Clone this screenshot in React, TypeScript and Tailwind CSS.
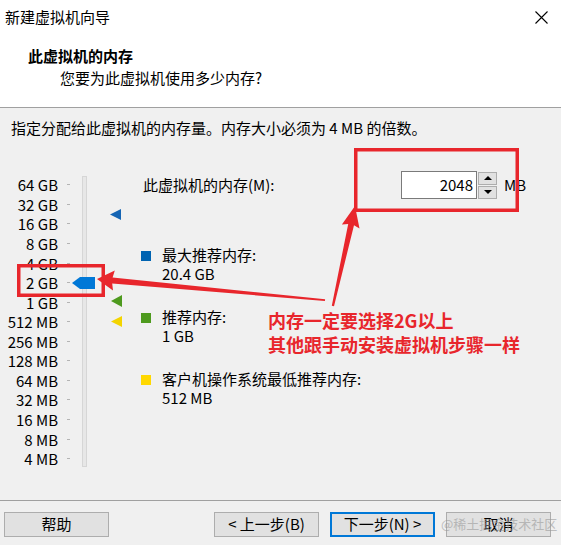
import React from 'react'

const SCALE = [
  '64 GB', '32 GB', '16 GB', '8 GB', '4 GB', '2 GB', '1 GB',
  '512 MB', '256 MB', '128 MB', '64 MB', '32 MB', '16 MB', '8 MB', '4 MB',
]

const FONT = { fontFamily: "'Noto Sans CJK SC', 'Noto Sans', sans-serif" }

function Legend({ color, label, value }: { color: string; label: string; value: string }) {
  return (
    <div className="flex leading-[19px]">
      <div className="w-[21px] pt-[6px]">
        <div className={`h-[10px] w-[10px] ${color}`} />
      </div>
      <div>
        <div>{label}</div>
        <div>{value}</div>
      </div>
    </div>
  )
}

function Btn({ children, primary }: { children: React.ReactNode; primary?: boolean }) {
  return (
    <div
      className={
        primary
          ? 'flex h-[25px] w-[105px] items-center justify-center border-2 border-[#0078d7] bg-[#e1e1e1]'
          : 'flex h-[25px] w-[105px] items-center justify-center border border-[#adadad] bg-[#e1e1e1]'
      }
    >
      {children}
    </div>
  )
}

export default function App() {
  return (
    <div className="relative h-[545px] w-[561px] overflow-hidden bg-[#f0f0f0] text-[15px] text-black" style={FONT}>
      {/* 标题栏 + 页头 */}
      <div className="h-[108px] border-b border-[#a0a0a0] bg-white">
        <div className="flex h-[34px] items-center justify-between pl-[5px] pr-[13px] leading-[20px]">
          <span>新建虚拟机向导</span>
          <svg width="13" height="13" viewBox="0 0 13 13" fill="none" stroke="#000" strokeWidth="1.1">
            <path d="M0.5 0.5L12.5 12.5M12.5 0.5L0.5 12.5" />
          </svg>
        </div>
        <div className="pl-[28px] pt-[12px]">
          <div className="font-bold leading-[20px]">此虚拟机的内存</div>
          <div className="mt-[2px] pl-[32px] leading-[20px]">您要为此虚拟机使用多少内存?</div>
        </div>
      </div>

      {/* 主体 */}
      <div className="h-[392px]">
        <div className="h-[40px] pl-[11px] pt-[10px] leading-[20px]">指定分配给此虚拟机的内存量。内存大小必须为 4 MB 的倍数。</div>

        <div className="flex">
          {/* 滑块 */}
          <div className="relative h-[352px] w-[141px] shrink-0">
            <div className="flex flex-col pt-[27px]">
              {SCALE.map((s) => (
                <div key={s} className="flex h-[19.57px] items-center leading-[19px]">
                  <span className="w-[58px] text-right">{s}</span>
                  <span className="ml-[9px] h-px w-[3px] bg-[#b4b4b4]" />
                </div>
              ))}
            </div>
            <div className="absolute left-[82px] top-[28px] h-[291px] w-[5px] border border-[#d6d6d6] bg-[#e7e7e7]" />
            <svg className="absolute left-0 top-0" width="141" height="352" viewBox="0 0 141 352">
              <polygon points="110,66.5 121,61 121,72" fill="#1565b4" />
              <polygon points="72,135 80,129 95,129 95,141 80,141" fill="#0078d7" />
              <polygon points="111,153 122,147 122,159" fill="#4e9a1e" />
              <polygon points="111,173.5 122,168 122,179" fill="#f3d400" />
            </svg>
          </div>

          {/* 右侧信息 */}
          <div className="flex-1">
            <div className="mt-[23px] flex h-[28px] items-center">
              <span className="w-[260px] pl-[2px]">此虚拟机的内存(M):</span>
              <div className="flex h-[28px] w-[76px] items-center justify-end border border-[#7a7a7a] bg-white pr-[3px]">2048</div>
              <div className="flex h-[28px] w-[20px] flex-col justify-center gap-px pl-px">
                <div className="flex h-[13px] items-center justify-center border border-[#adadad] bg-[#e1e1e1]">
                  <svg width="8" height="4" viewBox="0 0 8 4"><polygon points="0,4 4,0 8,4" fill="#000" /></svg>
                </div>
                <div className="flex h-[13px] items-center justify-center border border-[#adadad] bg-[#e1e1e1]">
                  <svg width="8" height="4" viewBox="0 0 8 4"><polygon points="0,0 8,0 4,4" fill="#000" /></svg>
                </div>
              </div>
              <span className="ml-[7px]">MB</span>
            </div>

            <div className="mt-[46px] flex flex-col gap-[24px]">
              <Legend color="bg-[#0063b1]" label="最大推荐内存:" value="20.4 GB" />
              <Legend color="bg-[#4e9a1e]" label="推荐内存:" value="1 GB" />
              <Legend color="bg-[#ffd800]" label="客户机操作系统最低推荐内存:" value="512 MB" />
            </div>
          </div>
        </div>
      </div>

      {/* 按钮栏 */}
      <div className="flex border-t border-[#a0a0a0] pl-[4px] pr-[10px] pt-[11px]">
        <Btn>帮助</Btn>
        <div className="ml-auto flex gap-[11px]">
          <Btn>&lt; 上一步(B)</Btn>
          <Btn primary>下一步(N) &gt;</Btn>
          <Btn>取消</Btn>
        </div>
      </div>

      {/* 水印 */}
      <div className="absolute left-[441px] top-[515px] text-[13px] leading-[18px] text-[#9a9a9a] opacity-60">@稀土掘金技术社区</div>

      {/* 红色标注 */}
      <svg className="pointer-events-none absolute left-0 top-0" width="561" height="545" viewBox="0 0 561 545">
        <rect x="18.75" y="265.75" width="84.5" height="29.5" fill="none" stroke="#e8262c" strokeWidth="3.5" />
        <rect x="355.75" y="149.75" width="161.5" height="60.5" fill="none" stroke="#e8262c" strokeWidth="3.5" />
        <polygon
          points="97,279 114.8,270.6 112.6,277.6 325.1,299.2 324.9,301 112.2,283.4 113,290.5"
          fill="#e8262c"
        />
        <polygon
          points="355,206 359.5,228.5 354,225.2 334,306.3 331.8,305.8 348.2,223.9 341.9,224.6"
          fill="#e8262c"
        />
      </svg>
      <div className="absolute left-[268px] top-[308px] text-[18px] font-bold leading-[24px] text-[#e8262c]">
        <div>内存一定要选择2G以上</div>
        <div>其他跟手动安装虚拟机步骤一样</div>
      </div>
    </div>
  )
}
